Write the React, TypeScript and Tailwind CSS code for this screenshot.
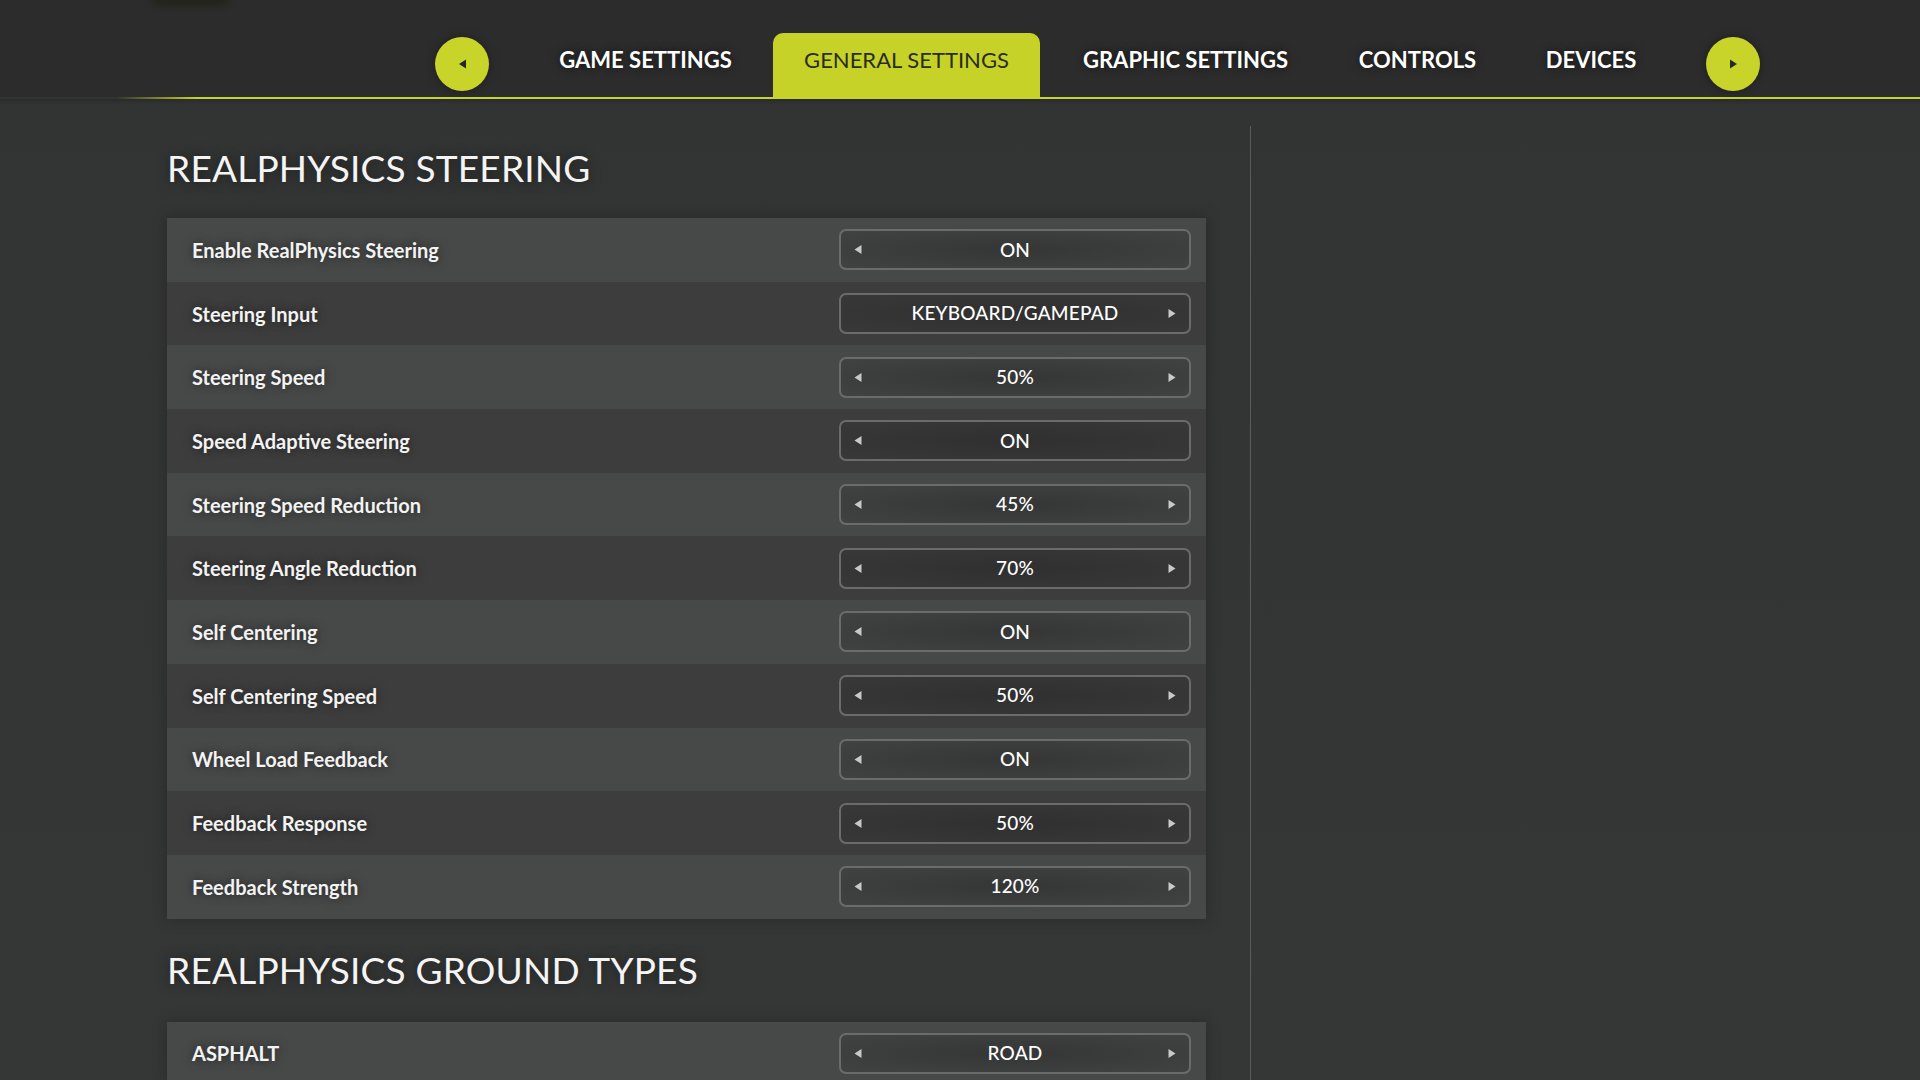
import { ReactNode } from "react"

type Setting = {
    label: string
    value: string
    left?: boolean
    right?: boolean
}

const steering: Setting[] = [
    { label: "Enable RealPhysics Steering", value: "ON", left: true },
    { label: "Steering Input", value: "KEYBOARD/GAMEPAD", right: true },
    { label: "Steering Speed", value: "50%", left: true, right: true },
    { label: "Speed Adaptive Steering", value: "ON", left: true },
    { label: "Steering Speed Reduction", value: "45%", left: true, right: true },
    { label: "Steering Angle Reduction", value: "70%", left: true, right: true },
    { label: "Self Centering", value: "ON", left: true },
    { label: "Self Centering Speed", value: "50%", left: true, right: true },
    { label: "Wheel Load Feedback", value: "ON", left: true },
    { label: "Feedback Response", value: "50%", left: true, right: true },
    { label: "Feedback Strength", value: "120%", left: true, right: true },
]

const ground: Setting[] = [{ label: "ASPHALT", value: "ROAD", left: true, right: true }]

const Arrow = ({ dir, className }: { dir: "left" | "right"; className?: string }) => (
    <svg className={className} width="8" height="10" viewBox="0 0 8 10" fill="currentColor">
        {dir === "left" ? <path d="M7.5 0.5v9L0.5 5z" /> : <path d="M0.5 0.5v9L7.5 5z" />}
    </svg>
)

const RoundButton = ({ dir }: { dir: "left" | "right" }) => (
    <button className="w-[54px] h-[54px] mt-[4px] rounded-full bg-[#c9d42a] flex items-center justify-center text-[#262820] shadow-[0_0_10px_rgba(0,0,0,0.35)]">
        <Arrow dir={dir} className="w-[9px] h-[10px]" />
    </button>
)

const Tab = ({ children, className }: { children: ReactNode; className: string }) => (
    <div className={`flex items-center justify-center pb-[12px] text-[22px] font-bold text-white [text-shadow:0_0_8px_rgba(0,0,0,0.6)] ${className}`}>
        {children}
    </div>
)

const Control = ({ s }: { s: Setting }) => (
    <div className="relative w-[352px] h-[41px] rounded-[7px] border-2 border-[#6a6c6b] bg-[radial-gradient(ellipse_at_center,rgba(30,31,30,0.45),rgba(30,31,30,0.15))] flex items-center">
        {s.left ? <Arrow dir="left" className="absolute left-[13px] top-[13px] w-[8px] h-[11px] text-[#c8cac9]" /> : null}
        <span className="w-full text-center text-[19px] font-medium text-white tracking-[0.2px]">{s.value}</span>
        {s.right ? <Arrow dir="right" className="absolute right-[13px] top-[13px] w-[8px] h-[11px] text-[#c8cac9]" /> : null}
    </div>
)

const Panel = ({ items }: { items: Setting[] }) => (
    <div className="flex flex-col shadow-[0_0_14px_rgba(0,0,0,0.25)]">
        {items.map((s, i) => (
            <div
                key={s.label}
                className={`h-[63.7px] flex items-center justify-between pl-[25px] pr-[15px] ${i % 2 === 0 ? "bg-[#474948]" : "bg-[#3c3d3c]"}`}
            >
                <span className="text-[20px] font-bold text-[#f3f3f3] [text-shadow:0_0_10px_rgba(0,0,0,0.55)]">{s.label}</span>
                <Control s={s} />
            </div>
        ))}
    </div>
)

const Heading = ({ children, className }: { children: ReactNode; className: string }) => (
    <h2 className={`text-[37px] leading-none font-normal text-[#f4f4f4] tracking-[0.2px] [text-shadow:0_0_12px_rgba(0,0,0,0.5)] ${className}`}>
        {children}
    </h2>
)

export default function App() {
    return (
        <div className="relative w-full h-[1080px] overflow-hidden bg-[linear-gradient(180deg,#323433,#353736)] font-['Lato','Open_Sans',sans-serif]">
            <div className="absolute left-[150px] top-[-14px] w-[80px] h-[20px] rounded-full bg-[#23241c] blur-[3px]" />
            <header className="bg-[#2b2c2b]">
                <nav className="flex h-[97px] pt-[33px] pl-[435px]">
                    <RoundButton dir="left" />
                    <Tab className="ml-[29px] w-[255px]">GAME SETTINGS</Tab>
                    <Tab className="w-[267px] rounded-t-[10px] bg-[#c6d228] !font-normal !text-[#2a2c1c] [text-shadow:none]">GENERAL SETTINGS</Tab>
                    <Tab className="w-[291px]">GRAPHIC SETTINGS</Tab>
                    <Tab className="w-[173px]">CONTROLS</Tab>
                    <Tab className="w-[174px]">DEVICES</Tab>
                    <div className="ml-[28px] flex">
                        <RoundButton dir="right" />
                    </div>
                </nav>
            </header>
            <div className="h-[2px] ml-[117px] bg-[linear-gradient(90deg,rgba(200,212,43,0),#c8d42b_80px)]" />
            <div className="h-[6px] bg-[linear-gradient(180deg,rgba(0,0,0,0.18),rgba(0,0,0,0))]" />
            <main className="flex">
                <section className="ml-[167px] w-[1039px] flex flex-col">
                    <Heading className="mt-[44px] mb-[32px]">REALPHYSICS STEERING</Heading>
                    <Panel items={steering} />
                    <Heading className="mt-[32px] mb-[34px]">REALPHYSICS GROUND TYPES</Heading>
                    <Panel items={ground} />
                </section>
                <div className="ml-[44px] mt-[21px] w-px h-[960px] bg-[#5a5c5b]" />
            </main>
        </div>
    )
}
